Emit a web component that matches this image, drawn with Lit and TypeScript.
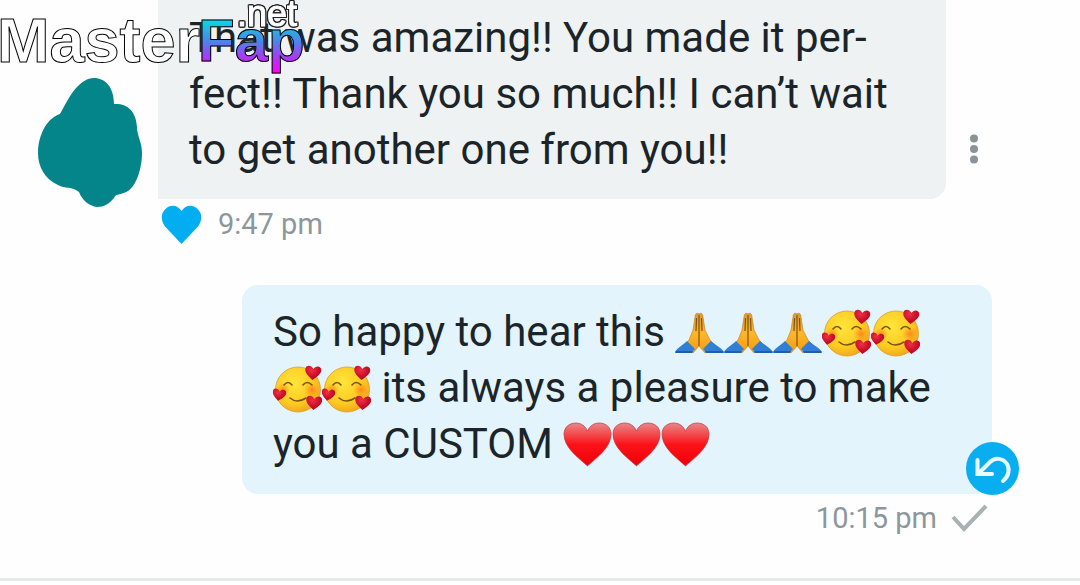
import { LitElement, html, css, svg } from "lit";
import { customElement } from "lit/decorators.js";

const heartPath = "M24 44 C15 36 1 26 1 13 C1 6 6 2 12.500 2 C18 2 22 5 24 10 C26 5 30 2 35.500 2 C42 2 47 6 47 13 C47 26 33 36 24 44Z";
const likePath = "M20 39 L4 22 C-1 16 -1 8 4 4 C9 -1 16 0 20 6 C24 0 31 -1 36 4 C41 8 41 16 36 22Z";

const smallHeart = (x: number, y: number, turn: number) => svg`
  <path transform="translate(${x} ${y}) rotate(${turn})" fill="url(#rose)"
    d="M0 7 C-5 3 -8 0 -8 -3 C-8 -8 -2 -8 0 -4 C2 -8 8 -8 8 -3 C8 0 5 3 0 7Z"/>`;

@customElement("app-root")
export class AppRoot extends LitElement {
  static styles = css`
    :host {
      display: block;
      position: relative;
      overflow: hidden;
      background: #fefefe;
      color: #1b2529;
      font-family: Roboto, "Liberation Sans", sans-serif;
    }
    .brand {
      position: absolute;
      left: 0;
      top: 0;
      z-index: 2;
      font-family: "Liberation Sans", Arial, sans-serif;
      white-space: nowrap;
      color: #fff;
    }
    .word, .accent, .suffix { position: absolute; }
    .word, .accent { font-weight: 700; line-height: 76px; -webkit-text-stroke: 1px #000; }
    .word { left: -3px; top: 2px; font-size: 63px; }
    .accent {
      left: 198px;
      top: 3px;
      font-size: 60px;
      color: transparent;
      background: linear-gradient(#00e5e5 18%, #4a86e8 50%, #a040f0 70%, #ff00ff 90%);
      -webkit-background-clip: text;
      background-clip: text;
    }
    .suffix {
      left: 237px;
      top: -6px;
      font-size: 36px;
      line-height: 40px;
      -webkit-text-stroke: 1px #fff;
      filter: drop-shadow(1px 0 0 #222) drop-shadow(-1px 0 0 #222) drop-shadow(0 1px 0 #222) drop-shadow(0 -1px 0 #222);
    }
    .thread { padding-bottom: 42px; border-bottom: 3px solid #e6e7e7; }
    .incoming {
      display: grid;
      grid-template-columns: 104px 1fr 56px;
      padding: 0 78px 0 38px;
    }
    .avatar { display: block; margin-top: 77px; width: 104px; height: 131px; }
    .body { margin-left: 16px; }
    .bubble { margin: 0; font-size: 42px; line-height: 56px; white-space: nowrap; }
    .received { background: #eef2f3; border-radius: 0 0 16px 0; padding: 10px 31px 21px; }
    .meta { display: flex; align-items: center; font-size: 29px; line-height: 36px; color: #8d979b; }
    .liked { height: 50px; gap: 16px; padding-left: 3px; }
    .icon { display: block; }
    button { border: 0; padding: 0; background: none; cursor: pointer; }
    .menu { align-self: start; margin-top: 129px; width: 56px; height: 40px; display: grid; place-items: center; }
    .outgoing { margin: 36px 88px 0 242px; position: relative; }
    .sent { background: #e3f4fc; border-radius: 16px; padding: 19px 31px 22px; }
    .undo {
      position: absolute;
      right: -27px;
      bottom: -1px;
      width: 53px;
      height: 53px;
      border-radius: 50%;
      background: #09aef0;
    }
    .status { justify-content: flex-end; gap: 14px; margin: 6px 92px 0 0; }
    .emoji { width: 49px; height: 49px; vertical-align: -12px; }
    .hidden { position: absolute; width: 0; height: 0; }
  `;

  private hands() {
    return svg`<svg class="emoji" viewBox="0 0 49 49" role="img" aria-label="Folded hands">
      <path fill="url(#skin)" stroke="#c47b12" stroke-width=".6" d="M24 5 C22 3 20 5 20 8 L18 21 L14 31 L9 36 L18 44 L24 37 L30 44 L40 36 L35 31 L30 21 L28 8 C28 5 26 3 24 5Z"/>
      <path fill="none" stroke="#83500f" stroke-width="1.200" d="M24 6V37M21.500 9L21 22M26.500 9L27 22"/>
      <path fill="#2f7fd6" d="M12 32 L20 40 L17 43 H0 C3 38 8 36 12 32Z M36 32 L28 40 L31 43 H49 C46 38 40 36 36 32Z"/>
      <path fill="#1d5fae" d="M1 42H18L17 44H0Z M30 42H48L49 44H31Z"/>
    </svg>`;
  }

  private face() {
    return svg`<svg class="emoji" viewBox="0 0 49 49" role="img" aria-label="Smiling face with hearts">
      <circle cx="25" cy="24.500" r="22.500" fill="url(#sun)" stroke="#dc9a2c" stroke-width=".8"/>
      <circle cx="39" cy="25" r="8" fill="url(#blush)"/>
      <circle cx="10" cy="25" r="7" fill="url(#blush)"/>
      <path fill="none" stroke="#7c5310" stroke-width="1.600" stroke-linecap="round" d="M11 20 Q15 15 19 20 M30 20 Q34 15 39 20 M17 33 Q24 39 33 33"/>
      ${smallHeart(40, 8, 5)}${smallHeart(41, 38, 5)}
      <g transform="translate(6 30) scale(.85)">${smallHeart(0, 0, 10)}</g>
    </svg>`;
  }

  private heart() {
    return svg`<svg class="emoji" viewBox="0 0 48 48" role="img" aria-label="Red heart"><path d=${heartPath} fill="url(#red)" stroke="#c5343b" stroke-width=".7"/></svg>`;
  }

  render() {
    return html`
      <div class="brand"><span class="word">Master</span><span class="accent">Fap</span><span class="suffix">.net</span></div>
      <main class="thread">
        <section class="incoming">
          <svg class="avatar" viewBox="38 77 104 131" role="img" aria-label="Avatar">
            <path fill="#04858a" d="M94 78 C105 78 114 87 114 104 C126 103 136 110 137 127 C137 136 142 142 142 153 C142 169 136 186 128 191 C122 195 116 193 114 198 C109 204 104 207 97 207 C89 206 82 200 79 192 C72 186 65 189 58 185 C45 179 38 167 38 153 C38 138 45 119 60 114 C66 103 71 93 77 87 C82 82 87 78 94 78Z"/>
          </svg>
          <div class="body">
            <p class="bubble received">That was amazing!! You made it per-<br>fect!! Thank you so much!! I can’t wait<br>to get another one from you!!</p>
            <div class="meta liked">
              <svg class="icon" width="41" height="39" viewBox="0 0 40 39" role="img" aria-label="Liked"><path d=${likePath} fill="#03adf1"/></svg>
              <time>9:47 pm</time>
            </div>
          </div>
          <button class="menu" aria-label="Message options">
            <svg class="icon" width="8" height="30" viewBox="0 0 8 30" fill="#8a9496"><circle cx="4" cy="4.500" r="4"/><circle cx="4" cy="15" r="4"/><circle cx="4" cy="25.500" r="4"/></svg>
          </button>
        </section>
        <section class="outgoing">
          <p class="bubble sent">So happy to hear this ${this.hands()}${this.hands()}${this.hands()}${this.face()}${this.face()}<br>${this.face()}${this.face()} its always a pleasure to make<br>you a CUSTOM ${this.heart()}${this.heart()}${this.heart()}</p>
          <button class="undo" aria-label="Reply">
            <svg class="icon" width="53" height="53" viewBox="0 0 53 53" fill="none" stroke="#e9fbff" stroke-width="4" stroke-linecap="round"><path d="M11.500 18V32H26M12 32L24 20C29 15 37 16 41 22C44 27 43 34 37 39"/></svg>
          </button>
        </section>
        <div class="meta status">
          <time>10:15 pm</time>
          <svg class="icon" width="37" height="28" viewBox="0 0 37 28" fill="none" stroke="#a9b1b3" stroke-width="4" role="img" aria-label="Sent"><path d="M2 13L13 25L35 2"/></svg>
        </div>
      </main>
      <svg class="hidden" aria-hidden="true"><defs>
        <linearGradient id="skin" x2="0" y2="1"><stop stop-color="#d99a3c"/><stop offset=".5" stop-color="#fdb62b"/><stop offset="1" stop-color="#f39a12"/></linearGradient>
        <radialGradient id="sun" cx=".4" cy=".35" r=".7"><stop stop-color="#ffe53b"/><stop offset=".65" stop-color="#fdcb22"/><stop offset="1" stop-color="#f0a31c"/></radialGradient>
        <radialGradient id="blush"><stop stop-color="#ff6a1f" stop-opacity=".75"/><stop offset="1" stop-color="#ff8a1f" stop-opacity="0"/></radialGradient>
        <radialGradient id="rose" cx=".4" cy=".3"><stop stop-color="#ee3045"/><stop offset="1" stop-color="#c50c26"/></radialGradient>
        <linearGradient id="red" x2="0" y2="1"><stop stop-color="#e8878a"/><stop offset=".2" stop-color="#f0595b"/><stop offset=".5" stop-color="#fb1218"/><stop offset="1" stop-color="#ef0008"/></linearGradient>
      </defs></svg>
    `;
  }
}
